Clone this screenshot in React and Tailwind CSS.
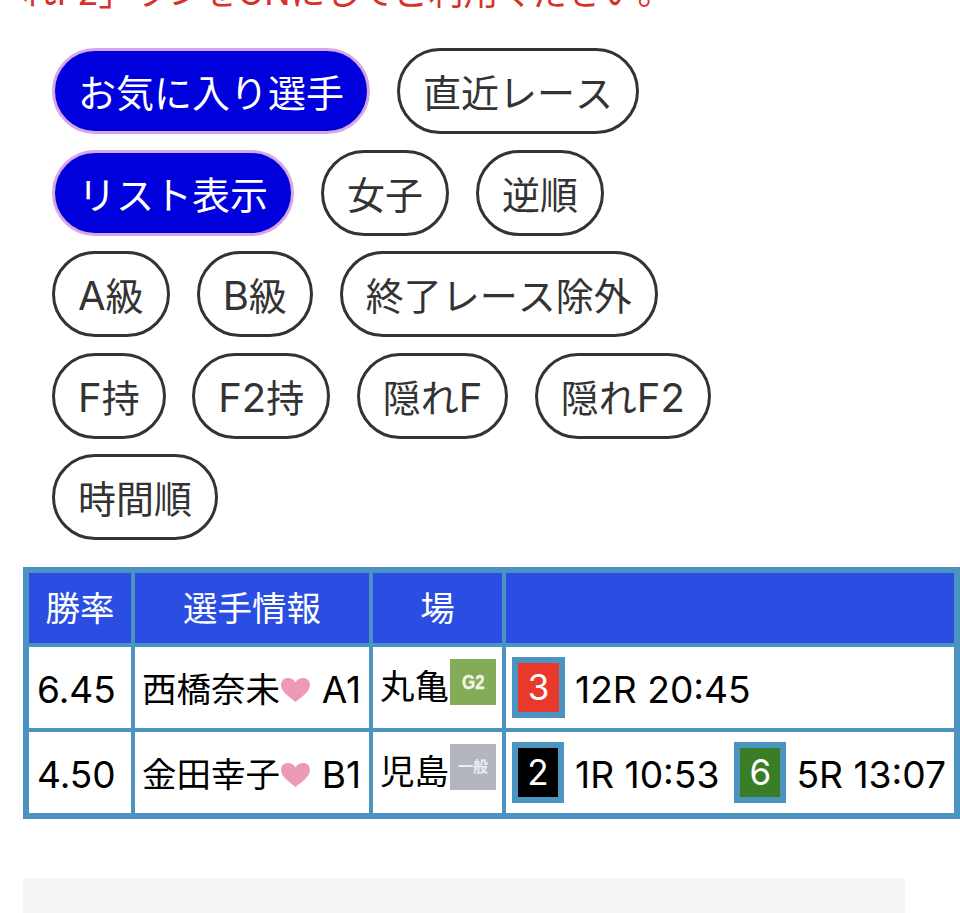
const FILTERS = [
  [{ label: "お気に入り選手", on: true }, { label: "直近レース" }],
  [{ label: "リスト表示", on: true }, { label: "女子" }, { label: "逆順" }],
  [{ label: "A級" }, { label: "B級" }, { label: "終了レース除外" }],
  [{ label: "F持" }, { label: "F2持" }, { label: "隠れF" }, { label: "隠れF2" }],
  [{ label: "時間順" }],
];

function Heart() {
  return (
    <svg viewBox="0 0 28 23" className="ml-[1px] w-[29px] h-[24px] shrink-0 blur-[0.4px]">
      <path
        d="M14 23C9 19 0 13.500 0 6.500 0 2.500 3 0 6.800 0 10 0 12.700 1.600 14 4.300 15.300 1.600 18 0 21.200 0 25 0 28 2.500 28 6.500 28 13.500 19 19 14 23Z"
        fill="#ec9ab5"
      />
    </svg>
  );
}

function Pill({ label, on }) {
  // latin letters sit a bit larger than the japanese text
  const parts = label.split(/([A-Z0-9]+)/);
  return (
    <button
      className={`h-[86px] px-[23px] pt-[4px] rounded-full border-[3px] text-[38px] leading-none whitespace-nowrap [font-kerning:none] ${
        on ? "bg-[#0000dc] border-[#d8a6e2] text-white" : "bg-white border-[#333333] text-[#333333]"
      }`}
    >
      {parts.map((p, i) =>
        i % 2 ? (
          <span key={i} className="text-[40px]">
            {p}
          </span>
        ) : (
          p
        )
      )}
    </button>
  );
}

function Boat({ n, color, width = "w-[53px]" }) {
  return (
    <span
      className={`${width} h-[61px] shrink-0 border-[6px] border-[#4b93c1] flex items-center justify-center text-white text-[35px] leading-none ${color}`}
    >
      {n}
    </span>
  );
}

const TH = "bg-[#2a4ee2] text-white font-normal text-[34.500px] h-[70px] text-center p-0";
const TD = "bg-white text-black text-[34.500px] p-0 h-[81px] whitespace-nowrap";

function Player({ name, rank }) {
  return (
    <div className="flex items-center pl-[7px] pr-[8px] pt-[4px]">
      <span>{name}</span>
      <Heart />
      <span className="ml-auto text-[37px]">{rank}</span>
    </div>
  );
}

function Venue({ name, children }) {
  return (
    <div className="flex items-center pl-[7px] -mt-[3px]">
      <span>{name}</span>
      <span className="ml-[1px] -mt-[8px] w-[46px] h-[46px] shrink-0 flex items-center justify-center">
        {children}
      </span>
    </div>
  );
}

function Race({ children, className }) {
  return <span className={`block pt-[4px] text-[37.200px] ${className}`}>{children}</span>;
}

export default function App() {
  return (
    <div className="w-[960px] h-[913px] overflow-hidden bg-white font-['Inter','Noto_Sans_CJK_JP',sans-serif]">
      <p className="-mt-[28px] pl-[22px] text-[34.800px] leading-[40px] text-[#d9302a] whitespace-nowrap">
        れF2」ランをONにしてご利用ください。
      </p>

      <div className="mt-[36px] pl-[52px] flex flex-col gap-[15.600px]">
        {FILTERS.map((row, i) => (
          <div key={i} className={`flex ${i === 3 ? "gap-[26.500px]" : "gap-[27px]"}`}>
            {row.map((f) => (
              <Pill key={f.label} {...f} />
            ))}
          </div>
        ))}
      </div>

      <table className="mt-[27px] ml-[23px] w-[937px] table-fixed border-separate border-spacing-[4px] border-2 border-[#4b93c1] bg-[#4b93c1]">
        <colgroup>
          <col className="w-[102px]" />
          <col className="w-[234px]" />
          <col className="w-[129px]" />
          <col />
        </colgroup>
        <thead>
          <tr>
            <th className={TH}>勝率</th>
            <th className={TH}>選手情報</th>
            <th className={TH}>場</th>
            <th className={TH}></th>
          </tr>
        </thead>
        <tbody>
          <tr>
            <td className={`${TD} pl-[8px] pt-[4px] text-[37px]`}>6.45</td>
            <td className={TD}>
              <Player name="西橋奈未" rank="A1" />
            </td>
            <td className={TD}>
              <Venue name="丸亀">
                <span className="w-full h-full flex items-center justify-center bg-[#84ab58] text-[#f1f3e6] font-bold text-[20px]">
                  <span className="inline-block scale-x-[0.85] font-['Liberation_Sans',sans-serif] [-webkit-text-stroke:0.4px_#f1f3e6]">
                    G2
                  </span>
                </span>
              </Venue>
            </td>
            <td className={TD}>
              <div className="flex items-center pl-[6px]">
                <Boat n="3" color="bg-[#e8392a]" />
                <Race className="ml-[10px]">12R 20:45</Race>
              </div>
            </td>
          </tr>
          <tr>
            <td className={`${TD} pl-[8px] pt-[4px] text-[37px]`}>4.50</td>
            <td className={TD}>
              <Player name="金田幸子" rank="B1" />
            </td>
            <td className={TD}>
              <Venue name="児島">
                <span className="w-full h-full flex items-center justify-center bg-[#b3b6be] text-[#eceef0] font-bold text-[15px]">
                  一般
                </span>
              </Venue>
            </td>
            <td className={TD}>
              <div className="flex items-center pl-[6px]">
                <Boat n="2" color="bg-black" width="w-[52px]" />
                <Race className="ml-[11px]">1R 10:53</Race>
                <span className="ml-[15px]">
                  <Boat n="6" color="bg-[#3a7d27]" width="w-[52px]" />
                </span>
                <Race className="ml-[10px]">5R 13:07</Race>
              </div>
            </td>
          </tr>
        </tbody>
      </table>

      <div className="mt-[59px] ml-[23px] w-[882px] h-[40px] bg-[#f5f5f5]"></div>
    </div>
  );
}
